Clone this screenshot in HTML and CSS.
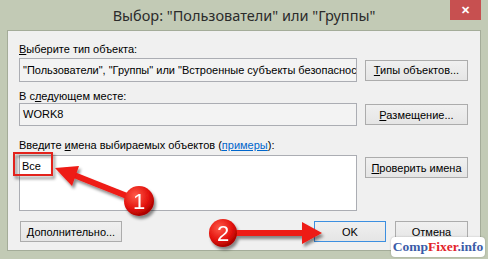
FILE: index.html
```html
<!DOCTYPE html>
<html lang="ru">

<head>
    <meta charset="UTF-8">
    <meta name="viewport" content="width=device-width, initial-scale=1.0">
    <title>Выбор: "Пользователи" или "Группы"</title>
    <link rel="stylesheet" href="styles.css">
</head>

<body>
    <div class="window">
        <div class="titlebar">
            <span></span>
            <h1 class="title">Выбор: "Пользователи" или "Группы"</h1>
            <div class="close">&#x2715;</div>
        </div>

        <div class="client">
            <div class="label label-type"><u>В</u>ыберите тип объекта:</div>
            <div class="row row-type">
                <div class="field">"Пользователи", "Группы" или "Встроенные субъекты безопасности"</div>
                <button class="btn"><u>Т</u>ипы объектов...</button>
            </div>

            <div class="label label-place">В с<u>л</u>едующем месте:</div>
            <div class="row row-place">
                <div class="field">WORK8</div>
                <button class="btn"><u>Р</u>азмещение...</button>
            </div>

            <div class="label label-names">Введите <u>и</u>мена выбираемых объектов (<a href="#" class="link">примеры</a>):</div>
            <div class="row row-names">
                <div class="names">Все</div>
                <button class="btn btn-check"><u>П</u>роверить имена</button>
            </div>

            <div class="footer">
                <button class="btn btn-more"><u>Д</u>ополнительно...</button>
                <span class="spacer"></span>
                <button class="btn btn-ok">OK</button>
                <button class="btn btn-cancel">Отмена</button>
            </div>
        </div>

        <!-- annotation layer: red arrows, numbers, highlight box -->
        <svg class="marks" viewBox="0 0 488 259" width="488" height="259">
            <defs>
                <filter id="shadow" x="-30%" y="-30%" width="160%" height="170%">
                    <feDropShadow dx="2" dy="3" stdDeviation="1.6" flood-color="#000" flood-opacity="0.45" />
                </filter>
                <radialGradient id="ball" cx="38%" cy="32%" r="70%">
                    <stop offset="0" stop-color="#ff5a4a" />
                    <stop offset="0.65" stop-color="#e3120c" />
                    <stop offset="1" stop-color="#a50000" />
                </radialGradient>
            </defs>

            <rect x="14" y="153" width="38" height="22" fill="none" stroke="#e3231f" stroke-width="2" filter="url(#shadow)" />

            <g filter="url(#shadow)">
                <line x1="74" y1="175" x2="132" y2="198" stroke="#ee1a14" stroke-width="6" />
                <polygon points="55,168 79,166 72,186" fill="#ee1a14" />
                <circle cx="139" cy="201" r="15" fill="url(#ball)" />
                <text x="139" y="209" class="num">1</text>
            </g>

            <g filter="url(#shadow)">
                <line x1="232" y1="233" x2="304" y2="233" stroke="#ee1a14" stroke-width="6" />
                <polygon points="302,222 322,233 302,244" fill="#ee1a14" />
                <circle cx="223" cy="233" r="14" fill="url(#ball)" />
                <text x="223" y="241" class="num">2</text>
            </g>
        </svg>

        <div class="watermark"><span class="blue">Comp</span><span class="red">Fixer</span><span class="blue">.info</span></div>
    </div>
</body>

</html>
```

FILE: styles.css
```css
body {
    margin: 0;
    font-family: "Liberation Sans", Arial, sans-serif;
    font-size: 11px;
    color: #000;
}

.window {
    position: relative;
    width: 488px;
    height: 259px;
    box-sizing: border-box;
    padding: 0 7px 8px 7px;
    background-color: #c2cab5;
    display: flex;
    flex-direction: column;
    overflow: hidden;
}

.titlebar {
    height: 30px;
    display: grid;
    grid-template-columns: 1fr auto 1fr;
}

.title {
    margin: 0;
    font-family: "Noto Sans", sans-serif;
    font-weight: normal;
    font-size: 14.5px;
    line-height: 30px;
    color: #2b2b2b;
}

.close {
    justify-self: end;
    width: 31px;
    height: 20px;
    background-color: #c75050;
    color: #fff;
    font-size: 11px;
    font-weight: bold;
    line-height: 20px;
    text-align: center;
}

.client {
    flex: 1;
    background-color: #f0f0f0;
    border: 1px solid #a4ac99;
    padding: 0 12px 0 11px;
}

.label {
    line-height: 14px;
    white-space: nowrap;
}

.label-type {
    margin-top: 11px;
    margin-bottom: 2px;
}

.label-place {
    margin-top: 7px;
}

.label-names {
    margin-top: 12px;
    margin-bottom: 3px;
}

.link {
    color: #0066cc;
}

.row {
    display: grid;
    grid-template-columns: 1fr 103px;
    gap: 8px;
    align-items: center;
}

.field {
    box-sizing: border-box;
    height: 24px;
    border: 1px solid #abadb3;
    background-color: #f3f3f3;
    padding: 0 3px;
    line-height: 22px;
    white-space: nowrap;
    overflow: hidden;
}

.row-place .field {
    height: 23px;
    line-height: 21px;
}

.names {
    box-sizing: border-box;
    height: 56px;
    border: 1px solid #abadb3;
    background-color: #fff;
    padding: 3px 3px 0 2px;
    line-height: 14px;
}

.row-names {
    align-items: start;
}

.btn {
    box-sizing: border-box;
    height: 21px;
    padding: 0;
    border: 1px solid #acacac;
    background: linear-gradient(#f0f0f0, #e5e5e5);
    font-family: "Liberation Sans", Arial, sans-serif;
    font-size: 11px;
    color: #000;
}

.btn-check {
    margin-top: 2px;
}

.footer {
    display: flex;
    gap: 9px;
    margin-top: 10px;
}

.btn-more {
    width: 102px;
    margin-left: 1px;
}

.spacer {
    flex: 1;
}

.btn-ok {
    width: 72px;
    border-color: #3c8fe0;
}

.btn-cancel {
    width: 73px;
}

.marks {
    position: absolute;
    left: 0;
    top: 0;
}

.num {
    font-family: "Liberation Sans", Arial, sans-serif;
    font-size: 22px;
    fill: #fff;
    text-anchor: middle;
}

.watermark {
    position: absolute;
    right: 3px;
    bottom: 2px;
    width: 94px;
    height: 20px;
    background-color: #fff;
    border-radius: 4px;
    box-shadow: 0 0 2px rgba(0, 0, 0, 0.25);
    font-family: "Liberation Serif", serif;
    font-weight: bold;
    font-size: 13.5px;
    line-height: 20px;
    text-align: center;
}

.blue {
    color: #3b5ca8;
}

.red {
    color: #e3232a;
}
```
